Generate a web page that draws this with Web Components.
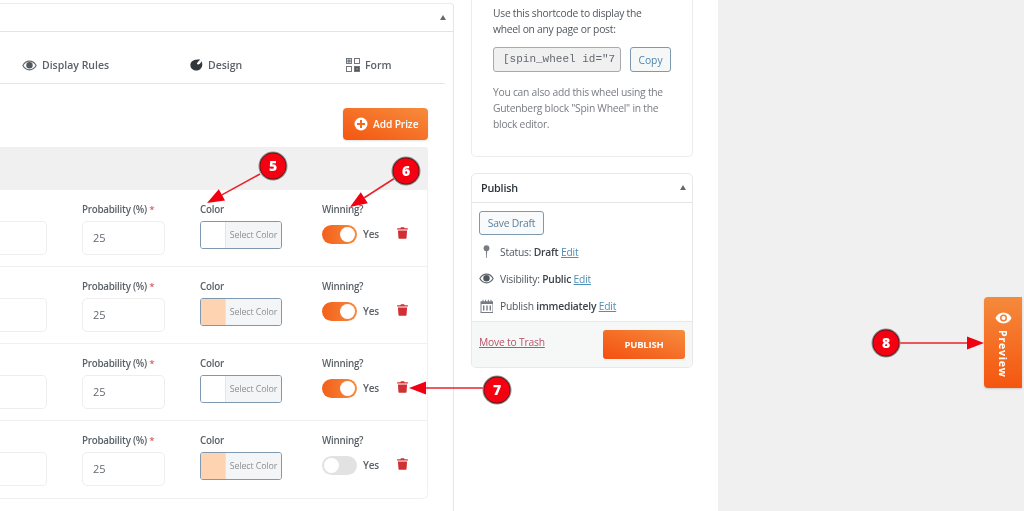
<!DOCTYPE html>
<html>
<head>
<meta charset="utf-8">
<title>Spin wheel editor</title>
<style>
  html, body { margin: 0; height: 511px; overflow: hidden; background: #f0f0f1; }
  body { font-family: "Open Sans", "Noto Sans", sans-serif; color: #3c434a; }
</style>
</head>
<body>
<wheel-page>
  <wheel-settings slot="main">
    <tab-item icon="eye">Display Rules</tab-item>
    <tab-item icon="palette">Design</tab-item>
    <tab-item icon="qr">Form</tab-item>
    <prize-row slot="rows" swatch="#ffffff" on></prize-row>
    <prize-row slot="rows" swatch="#fdd3b2" on></prize-row>
    <prize-row slot="rows" swatch="#ffffff" on></prize-row>
    <prize-row slot="rows" swatch="#fdd3b2"></prize-row>
  </wheel-settings>
  <shortcode-box slot="side"></shortcode-box>
  <publish-box slot="side"></publish-box>
</wheel-page>
<preview-tab></preview-tab>
<step-marks></step-marks>

<script>
const ICONS = {
  eye: `<svg width="15" height="11" viewBox="0 0 15 11"><path fill="#646970" d="M7.500 .6C4.300 .6 1.600 2.600 .2 5.500c1.400 2.900 4.100 4.900 7.300 4.900s5.900-2 7.300-4.900C13.400 2.600 10.700 .6 7.500 .6zm0 8.700c-2.500 0-4.700-1.500-6-3.800 1.300-2.300 3.500-3.800 6-3.800s4.700 1.500 6 3.800c-1.300 2.300-3.500 3.800-6 3.800z"/><circle cx="7.500" cy="5.300" r="3.200" fill="#50575e"/></svg>`,
  palette: `<svg width="13" height="12" viewBox="0 0 13 12"><path fill="#32373c" d="M6.200 .7C3 .7 .4 3 .4 6.100c0 3.200 2.600 5.500 5.600 5.500 3.300 0 6.300-2.500 6.300-6.200 0-1.100-.3-2.200-.9-3.100-.3 1.400-1.500 2.800-3 3.100C7 5.600 6.600 4.700 7.300 3.700 8 2.800 9 1.800 10.300 .6 9 .5 7.500 .5 6.200 .7z"/></svg>`,
  qr: `<svg width="14" height="14" viewBox="0 0 14 14"><g fill="none" stroke="#646970" stroke-width=".9"><rect x=".5" y=".5" width="5" height="5"/><rect x="8.500" y=".5" width="5" height="5"/><rect x=".5" y="8.500" width="5" height="5"/><rect x="8.500" y="8.500" width="5" height="5"/></g><path fill="#50575e" d="M1.500 1.500h3v3h-3zM9 9h4v4H9z"/><path fill="#fff" d="M2.500 2.500h1v1h-1zM10.500 10.500h1v1h-1z"/></svg>`,
  trash: `<svg width="11" height="12" viewBox="0 0 12 13"><path fill="#d03034" d="M4.300 .3h3.400l.6 1H11.400c.3 0 .5 .2 .5 .5v.9H.1v-.9c0-.3 .2-.5 .5-.5h3.100zM1 3.800h10l-.6 8.100c0 .5-.4 .9-.9 .9h-7c-.5 0-.9-.4-.9-.9z"/></svg>`,
  pin: `<svg width="7" height="13" viewBox="0 0 7 13"><circle cx="3.500" cy="3.200" r="2.900" fill="#787c82"/><path fill="#787c82" d="M2.800 5h1.400l-.4 8h-.6z"/></svg>`,
  cal: `<svg width="14" height="14" viewBox="0 0 14 14"><path fill="#787c82" d="M.5 2.200h2V.8h1v1.400h1.600V.8h1v1.400h1.800V.8h1v1.400h1.600V.8h1v1.400h1.500V14H.5zM1.500 5v8h11V5z"/><path fill="#787c82" d="M3 6.500h1.400v5H3zM6.300 6.500h1.400v5H6.300zM9.600 6.500H11v5H9.600z"/></svg>`
};

class TabItem extends HTMLElement {
  constructor() {
    super();
    this.attachShadow({ mode: "open" });
    this.shadowRoot.innerHTML = `
    <style>
      :host { display: flex; align-items: center; gap: 5px; height: 20px; font-size: 10.500px; font-weight: 600; color: #5a6168; }
    </style>
    ${ICONS[this.getAttribute("icon")]}<slot></slot>`;
  }
}

class WheelSettings extends HTMLElement {
  constructor() {
    super();
    this.attachShadow({ mode: "open" });
    this.shadowRoot.innerHTML = `
    <style>
      :host { display: block; width: 454px; height: 508px; margin-top: 3px; box-sizing: border-box;
        border-top: 1px solid #ececec; border-right: 1px solid #e6e6e6; border-top-right-radius: 4px; }
      .head { height: 27px; border-bottom: 1px solid #e4e4e4; position: relative; }
      .head i { position: absolute; right: 7px; top: 11px; border: 3.500px solid transparent; border-top: 0; border-bottom: 5px solid #646970; }
      .tabs { height: 52px; width: 445px; box-sizing: border-box; padding: 23px 0 0 22px; display: grid;
        grid-template-columns: 168px 156px 1fr; align-items: start; border-bottom: 1px solid #e6e6e6; }
      .body { padding-right: 25px; }
      .bar { display: flex; justify-content: flex-end; padding: 24px 0 7px; }
      button { all: unset; box-sizing: border-box; width: 85px; height: 32px; display: flex; align-items: center; gap: 5px; padding-left: 11px;
        border-radius: 4px; color: #fff; font-size: 10.200px; font-weight: 600; letter-spacing: -.1px; background: linear-gradient(to top right, #f4560f, #f68c3e); box-shadow: 0 1px 2px rgba(0,0,0,.12); }
      .strip { height: 43px; background: #f0f0f0; border-top-right-radius: 3px; }
      .rows { border: solid #f0f0f0; border-width: 0 1px 1px 0; border-radius: 0 0 5px 0; }
    </style>
    <div class="head"><i></i></div>
    <div class="tabs"><slot></slot></div>
    <div class="body">
      <div class="bar"><button>
        <svg width="14" height="14" viewBox="0 0 14 14"><circle cx="7" cy="7" r="6.500" fill="#fff"/><path fill="#f4681f" d="M6 3h2v3h3v2H8v3H6V8H3V6h3z"/></svg>
        Add Prize</button></div>
      <div class="strip"></div>
      <div class="rows"><slot name="rows"></slot></div>
    </div>`;
  }
}

class PrizeRow extends HTMLElement {
  constructor() {
    super();
    this.attachShadow({ mode: "open" });
    const on = this.hasAttribute("on");
    this.shadowRoot.innerHTML = `
    <style>
      :host { display: grid; grid-template-columns: 47px 83px 82px auto; column-gap: 35px; height: 77px; box-sizing: border-box;
        padding-top: 12.600px; border-bottom: 1px solid #f0f0f0; font-size: 9.800px; letter-spacing: -.25px; color: #5a6168; }
      :host(:last-child) { border-bottom: 0; }
      .f { display: flex; flex-direction: column; gap: 6px; }
      label { font-weight: 600; line-height: 13px; height: 12px; white-space: nowrap; }
      label b { color: #d63638; font-weight: 400; }
      .in { height: 34px; box-sizing: border-box; border: 1px solid #eeeeee; border-radius: 5px; padding-left: 10px;
        display: flex; align-items: center; font-size: 11px; letter-spacing: 0; color: #646970; }
      .cut { border-left: 0; border-radius: 0 5px 5px 0; margin-top: 18px; }
      .col { display: flex; height: 28px; width: 82px; box-sizing: border-box; border: 1px solid #7e98b0; border-radius: 3px; overflow: hidden; }
      .col i { width: 24px; background: ${this.getAttribute("swatch")}; border-right: 1px solid #e3e5e8; }
      .col span { flex: 1; background: #f4f5f6; color: #8c8f94; font-size: 8.900px; letter-spacing: -.1px; display: flex; align-items: center; justify-content: center; white-space: nowrap; }
      .w { margin-left: 5px; position: relative; width: 106px; }
      .line { display: flex; align-items: center; gap: 6px; height: 19px; padding-top: 4px; }
      .t { width: 35px; height: 19px; border-radius: 10px; box-sizing: border-box; position: relative;
        background: ${on ? "linear-gradient(to right, #f4601a, #f68a3e)" : "#e2e2e2"}; }
      .t::after { content: ""; position: absolute; top: 2px; width: 15px; height: 15px; border-radius: 50%; background: #fff; ${on ? "right: 2px" : "left: 2px"}; }
      .yes { font-weight: 600; font-size: 10px; }
      .del { position: absolute; left: 75px; top: 24px; line-height: 0; }
    </style>
    <div class="in cut"></div>
    <div class="f"><label>Probability (%) <b>*</b></label><div class="in">25</div></div>
    <div class="f"><label>Color</label><div class="col"><i></i><span>Select Color</span></div></div>
    <div class="f w"><label>Winning?</label>
      <div class="line"><div class="t"></div><span class="yes">Yes</span></div>
      <span class="del">${ICONS.trash}</span>
    </div>`;
  }
}

class ShortcodeBox extends HTMLElement {
  constructor() {
    super();
    this.attachShadow({ mode: "open" });
    this.shadowRoot.innerHTML = `
    <style>
      :host { display: block; width: 222px; height: 157px; box-sizing: border-box; padding: 5px 20px 0 21px;
        border: 1px solid #ececec; border-top: 0; border-radius: 0 0 5px 5px; font-size: 10.300px; line-height: 16px; letter-spacing: -.25px; color: #50575e; }
      p { margin: 0; width: 172px; }
      .gr { color: #787c82; }
      .code { display: flex; gap: 9px; margin: 10px 0 12px; letter-spacing: 0; }
      .code div { width: 128px; height: 25px; box-sizing: border-box; padding-left: 9px; overflow: hidden; white-space: nowrap;
        background: #f0f0f1; border: 1px solid #a7aaad; border-radius: 3px; font: 11px/23px "Liberation Mono", monospace; color: #646970; }
      .code button { all: unset; width: 41px; height: 25px; box-sizing: border-box; text-align: center; border: 1px solid #7e98b0; border-radius: 3px; color: #4f86b0; line-height: 24px; background: #f6f7f7; }
    </style>
    <p>Use this shortcode to display the wheel on any page or post:</p>
    <div class="code"><div>[spin_wheel id="7</div><button>Copy</button></div>
    <p class="gr">You can also add this wheel using the Gutenberg block "Spin Wheel" in the block editor.</p>`;
  }
}

class PublishBox extends HTMLElement {
  constructor() {
    super();
    this.attachShadow({ mode: "open" });
    this.shadowRoot.innerHTML = `
    <style>
      :host { display: block; width: 222px; height: 195px; margin-top: 16px; box-sizing: border-box; border: 1px solid #e8e8e8; border-radius: 5px;
        font-size: 10.300px; letter-spacing: -.2px; color: #50575e; overflow: hidden; }
      .h { height: 27px; padding-bottom: 1px; display: flex; align-items: center; justify-content: space-between; padding-left: 9px; padding-right: 6px; border-bottom: 1px solid #e4e4e4;
        font-size: 10.800px; font-weight: 600; color: #2c3338; }
      .h i { border: 3.500px solid transparent; border-top: 0; border-bottom: 5px solid #646970; }
      .b { height: 118px; padding: 8px 7px 0; box-sizing: border-box; }
      .save { all: unset; display: block; width: 65px; height: 24px; box-sizing: border-box; text-align: center; line-height: 22px; border: 1px solid #7e98b0; border-radius: 3px; color: #5b7f9b; background: #f9fafb; }
      .m { display: flex; align-items: center; height: 27px; }
      .m:first-of-type { margin-top: 3px; }
      .m span { width: 21px; flex: none; display: flex; justify-content: center; padding-right: 6px; box-sizing: border-box; }
      b { font-weight: 600; color: #3c434a; }
      u { color: #4f8fb8; }
      .f { height: 45px; display: flex; align-items: center; justify-content: space-between; padding: 0 7px; background: #f6f7f7; border-top: 1px solid #e8e8e8; }
      .f u { color: #b8546a; margin-top: -6px; }
      .pub { all: unset; width: 82px; height: 29px; text-align: center; line-height: 30px; border-radius: 3px; color: #fff; font-size: 9.500px; font-weight: 700;
        background: linear-gradient(to top right, #f4500f, #f68c3e); }
    </style>
    <div class="h">Publish<i></i></div>
    <div class="b">
      <button class="save">Save Draft</button>
      <div class="m"><span>${ICONS.pin}</span><div>Status: <b>Draft</b> <u>Edit</u></div></div>
      <div class="m"><span>${ICONS.eye}</span><div>Visibility: <b>Public</b> <u>Edit</u></div></div>
      <div class="m"><span>${ICONS.cal}</span><div>Publish <b>immediately</b> <u>Edit</u></div></div>
    </div>
    <div class="f"><u>Move to Trash</u><button class="pub">PUBLISH</button></div>`;
  }
}

class WheelPage extends HTMLElement {
  constructor() {
    super();
    this.attachShadow({ mode: "open" });
    this.shadowRoot.innerHTML = `
    <style>
      :host { display: flex; width: 718px; height: 511px; background: #fff; overflow: hidden; filter: blur(.3px); }
      .side { margin-left: 17px; width: 222px; }
    </style>
    <slot name="main"></slot>
    <div class="side"><slot name="side"></slot></div>`;
  }
}

class PreviewTab extends HTMLElement {
  constructor() {
    super();
    this.attachShadow({ mode: "open" });
    this.shadowRoot.innerHTML = `
    <style>
      :host { position: absolute; left: 984px; top: 297px; width: 38px; height: 91px; box-sizing: border-box; padding-top: 15px;
        display: flex; flex-direction: column; align-items: center; gap: 6px; border-radius: 4px 0 0 4px; color: #fff;
        background: linear-gradient(to bottom, #f58a3c, #f4560f); box-shadow: 0 1px 2px rgba(0,0,0,.15); filter: blur(.3px); }
      span { writing-mode: vertical-rl; font-size: 10.500px; font-weight: 700; letter-spacing: .8px; line-height: 12px; }
    </style>
    <svg width="17" height="12" viewBox="0 0 17 12"><path fill="#fff" fill-rule="evenodd" d="M8.500 .5C5 .5 2 2.700 .4 6 2 9.300 5 11.500 8.500 11.500S15 9.300 16.600 6C15 2.700 12 .5 8.500 .5zM8.500 2.500a3.500 3.500 0 1 1 0 7 3.500 3.500 0 0 1 0-7z"/><circle cx="8.500" cy="6" r="2" fill="#fff"/></svg>
    <span>Preview</span>`;
  }
}

// numbered markers with their arrows, drawn over the whole screenshot
class StepMarks extends HTMLElement {
  constructor() {
    super();
    this.attachShadow({ mode: "open" });
    const marks = [
      { n: 5, cx: 273, cy: 166, tx: 207, ty: 203, fx: 260, fy: 174 },
      { n: 6, cx: 406, cy: 171, tx: 350, ty: 207, fx: 395, fy: 178 },
      { n: 7, cx: 497, cy: 390, tx: 409, ty: 388, fx: 483, fy: 388 },
      { n: 8, cx: 886, cy: 343, tx: 984, ty: 343, fx: 900, fy: 343 }
    ];
    let out = "";
    for (const m of marks) {
      const a = Math.atan2(m.ty - m.fy, m.tx - m.fx);
      const back = 17, w = 6.5;
      const bx = m.tx - Math.cos(a) * back, by = m.ty - Math.sin(a) * back;
      const nx = -Math.sin(a) * w, ny = Math.cos(a) * w;
      out += `<line x1="${m.fx}" y1="${m.fy}" x2="${bx}" y2="${by}" stroke="#e8232a" stroke-width="1.600"/>
        <polygon fill="#f00010" points="${m.tx},${m.ty} ${bx + nx},${by + ny} ${bx - nx},${by - ny}"/>
        <circle cx="${m.cx}" cy="${m.cy}" r="14.500" fill="#9a8a8a"/>
        <circle cx="${m.cx}" cy="${m.cy}" r="13.400" fill="#2a1a1a"/>
        <circle cx="${m.cx}" cy="${m.cy}" r="12.800" fill="#f50010"/>
        <text x="${m.cx}" y="${m.cy + 5}" text-anchor="middle" font-family="Open Sans, sans-serif" font-size="14" font-weight="800" fill="#fff">${m.n}</text>`;
    }
    this.shadowRoot.innerHTML = `
    <style>:host { position: absolute; left: 0; top: 0; width: 1024px; height: 511px; pointer-events: none; filter: blur(.3px); } svg { display: block; }</style>
    <svg width="1024" height="511">${out}</svg>`;
  }
}

customElements.define("tab-item", TabItem);
customElements.define("wheel-settings", WheelSettings);
customElements.define("prize-row", PrizeRow);
customElements.define("shortcode-box", ShortcodeBox);
customElements.define("publish-box", PublishBox);
customElements.define("wheel-page", WheelPage);
customElements.define("preview-tab", PreviewTab);
customElements.define("step-marks", StepMarks);
</script>
</body>
</html>
